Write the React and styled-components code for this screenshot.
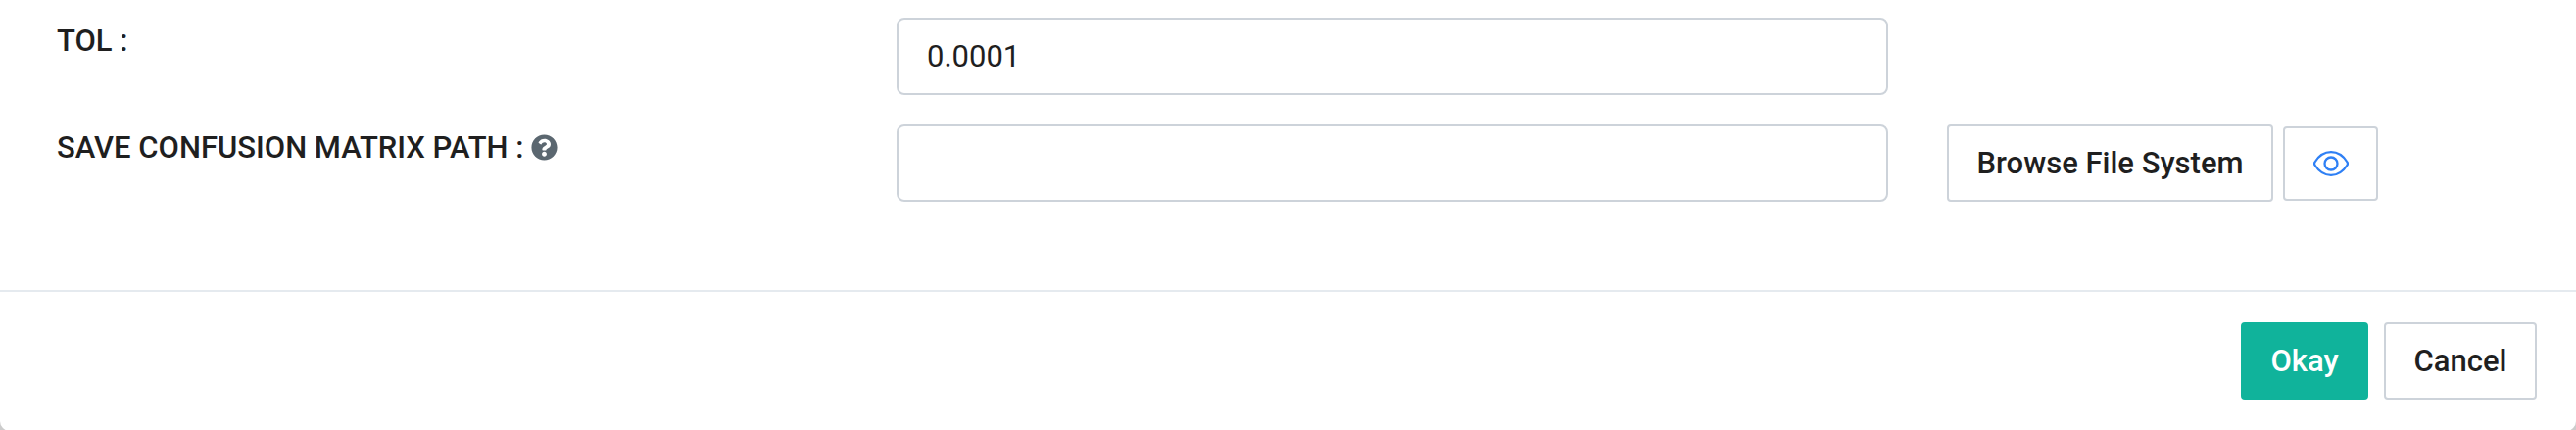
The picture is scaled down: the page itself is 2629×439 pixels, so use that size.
import React from "react";
import styled, { createGlobalStyle } from "styled-components";
import { FaQuestionCircle } from "react-icons/fa";

const GlobalStyle = createGlobalStyle`
  * { box-sizing: border-box; }
  html, body { margin: 0; height: 439px; overflow: hidden; background: #cccccc; }
  body, input, button { font-family: Roboto, sans-serif; font-size: 31px; color: #1f1f1f; }
`;

const Dialog = styled.section`
  width: 100%;
  height: 440px;
  display: flex;
  flex-direction: column;
  background: #fff;
  border-radius: 0 0 10px 10px;
  overflow: hidden;
`;

const Form = styled.div`
  height: 296px;
  padding: 18px 0 0 58px;
  display: flex;
  flex-direction: column;
  gap: 30px;
`;

const Row = styled.div`
  height: 79px;
  display: grid;
  grid-template-columns: 857px 1012px auto;
  align-items: start;
  justify-content: start;
`;

const Label = styled.label`
  display: flex;
  align-items: center;
  gap: 8px;
  height: 47px;
  font-weight: 500;
  white-space: nowrap;
`;

const HelpIcon = styled(FaQuestionCircle)`
  width: 27px;
  height: 27px;
  margin-bottom: 1px;
  color: #5b6770;
`;

const TextField = styled.input`
  width: 100%;
  height: 79px;
  padding: 0 29px;
  border: 2px solid #cdd3da;
  border-radius: 8px;
  background: #fff;
  outline: none;
`;

const Actions = styled.div`
  display: flex;
  align-items: center;
  gap: 10px;
  margin-left: 60px;
`;

const Button = styled.button`
  width: ${(p) => p.$width}px;
  height: ${(p) => p.$height || 79}px;
  padding: 0;
  display: flex;
  align-items: center;
  justify-content: center;
  white-space: nowrap;
  font-weight: 500;
  border: 2px solid ${(p) => (p.$primary ? "#10b39b" : "#cdd3da")};
  border-radius: 4px;
  background: ${(p) => (p.$primary ? "#10b39b" : "#fff")};
  color: ${(p) => (p.$primary ? "#fff" : "#1f1f1f")};
`;

const Footer = styled.footer`
  flex: 1;
  display: flex;
  justify-content: flex-end;
  align-items: flex-start;
  gap: 16px;
  padding: 31px 40px 0 0;
  border-top: 2px solid #e5eaef;
`;

const EyeIcon = () => (
  <svg width="36" height="26" viewBox="0 0 36 26" fill="none" stroke="#2f80f5" strokeWidth="2.3">
    <path d="M1.5 11.5C5.5 5 11.2 1.2 18 1.2S30.5 5 34.5 11.5Q35.4 13 34.5 14.5C30.5 21 24.8 24.8 18 24.8S5.5 21 1.5 14.5Q.6 13 1.5 11.5Z" />
    <circle cx="18" cy="13" r="6.5" />
  </svg>
);

export default function App() {
  return (
    <>
      <GlobalStyle />
      <Dialog>
        <Form>
          <Row>
            <Label htmlFor="tol">TOL :</Label>
            <TextField id="tol" defaultValue="0.0001" />
          </Row>
          <Row>
            <Label htmlFor="matrix-path">
              SAVE CONFUSION MATRIX PATH :
              <HelpIcon />
            </Label>
            <TextField id="matrix-path" />
            <Actions>
              <Button $width={333}>Browse File System</Button>
              <Button $width={97} $height={76} aria-label="Preview">
                <EyeIcon />
              </Button>
            </Actions>
          </Row>
        </Form>
        <Footer>
          <Button $primary $width={130}>Okay</Button>
          <Button $width={156}>Cancel</Button>
        </Footer>
      </Dialog>
    </>
  );
}
